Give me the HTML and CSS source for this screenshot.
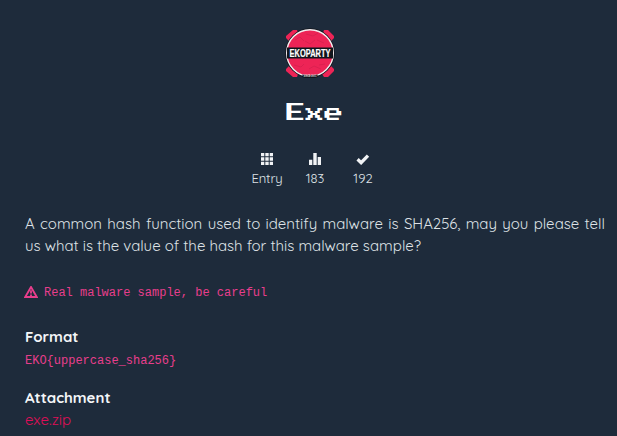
FILE: index.html
```
<!DOCTYPE html>
<html lang="en">
<head>
<meta charset="utf-8">
<title>Exe</title>
<link rel="stylesheet" href="styles.css">
</head>
<body>
<main class="challenge">
  <header class="head">
    <svg class="logo" viewBox="0 0 50 50">
      <path d="M7 2h4l1 3-9 8-3-3V8zM38 2h4l6 6v2l-3 3-8-8zM0 41l3-3 9 8-1 3H7l-7-6zM45 38l3 3v2l-6 6h-4l-2-3z" fill="#ed2456"/>
      <circle cx="24" cy="25" r="24.800" fill="#10151c"/>
      <circle cx="24" cy="25" r="23.300" fill="#ed2456" stroke="#f4eef0" stroke-width="1.400"/>
      <path d="M9 12l5-3 4 4M20 6l7 2 5-3M31 12l7 3M8 37l7 2 3-3M23 41l5-3 7 3M33 37l6-1M19 13l5 3 5-4" fill="none" stroke="#c91d49" stroke-width=".8" opacity=".6"/>
      <path d="M1 19.500h46v11H1z" fill="#10151c"/>
      <text class="logo-name" x="3.500" y="28.600" textLength="41" lengthAdjust="spacingAndGlyphs">EKOPARTY</text>
      <path d="M16.500 46.400q7.500 2 15 0v2.800q-7.500 1.800-15 0z" fill="#10151c"/>
      <text class="logo-since" x="17.500" y="49" textLength="13" lengthAdjust="spacingAndGlyphs">SINCE 2001</text>
    </svg>
    <h1 class="title">Exe</h1>
  </header>
  <div class="stats">
    <div class="stat entry">
      <svg class="icon" viewBox="0 0 12 12"><path d="M0 0h3.300v3.300H0zM4.300 0h3.400v3.300H4.300zM8.700 0H12v3.300H8.700zM0 4.300h3.300v3.400H0zM4.300 4.300h3.400v3.400H4.300zM8.700 4.300H12v3.400H8.700zM0 8.700h3.300V12H0zM4.300 8.700h3.400V12H4.300zM8.700 8.700H12V12H8.700z"/></svg>
      <span>Entry</span>
    </div>
    <div class="stat">
      <svg class="icon" viewBox="0 0 12 12"><path d="M0 6.700h3.300V12H0zM4.300 0h3.400v12H4.300zM8.700 4H12v8H8.700z"/></svg>
      <span>183</span>
    </div>
    <div class="stat">
      <svg class="icon check" viewBox="0 0 14 12"><path d="M1.600 6.300l3.500 3.400L12 2.600" fill="none" stroke="#f1f3f5" stroke-width="3.300"/></svg>
      <span>192</span>
    </div>
  </div>
  <p class="question">A common hash function used to identify malware is SHA256, may you please tell us what is the value of the hash for this malware sample?</p>
  <p class="warning">
    <svg class="alert" viewBox="0 0 14 12"><path d="M7 1L12.800 11H1.200z" fill="none" stroke="#e83e8c" stroke-width="1.900"/><path d="M6.100 4.200h1.800v3.300H6.100zM6.100 8.500h1.800v1.500H6.100z" fill="#e83e8c"/></svg>
    <code>Real malware sample, be careful</code>
  </p>
  <section class="block format">
    <h2 class="label">Format</h2>
    <code class="value">EKO{uppercase_sha256}</code>
  </section>
  <section class="block attachment">
    <h2 class="label">Attachment</h2>
    <a class="value link">exe.zip</a>
  </section>
</main>
</body>
</html>
```
FILE: styles.css
```
* { box-sizing: border-box; }
body {
  margin: 0;
  height: 436px;
  overflow: hidden;
  background: #1e2b3b;
  color: #dee2e6;
  font: 15px/22px Quicksand, Lato, sans-serif;
}
h1, h2, p { margin: 0; }
.challenge { padding: 28px 12px 0 25px; }
.head {
  display: flex;
  flex-direction: column;
  align-items: center;
  margin-left: -8px;
}
.logo { width: 50px; height: 50px; overflow: visible; }
.logo-name { font: 700 10.500px "Liberation Sans", sans-serif; fill: #fff; stroke: #fff; stroke-width: .2px; }
.logo-since { font: 700 2.600px "Liberation Sans", sans-serif; fill: #ddd; }
.title {
  margin: 18px 0 0 8px;
  height: 33px;
  color: #fff;
  font: 400 19px/34px "Press Start 2P", "VT323", "DejaVu Sans Mono", monospace;
}
.stats { display: flex; margin: 24px 0 0 218px; }
.stat {
  width: 48px;
  display: flex;
  flex-direction: column;
  align-items: center;
  font-size: 13px;
  line-height: 20px;
}
.entry { letter-spacing: -.1px; }
.icon { width: 12px; height: 12px; margin-bottom: 3px; fill: #f1f3f5; }
.check { width: 14px; }
.question { margin-top: 25px; text-align: justify; }
.warning {
  display: flex;
  align-items: center;
  gap: 6px;
  height: 22px;
  margin-top: 25px;
  color: #e83e8c;
}
.alert { width: 14px; height: 12px; margin: -2px 0 0 -1px; }
code { font: 12px/22px "Liberation Mono", monospace; color: #e83e8c; }
.block { display: flex; flex-direction: column; }
.format { margin-top: 22px; }
.format .value { line-height: 24px; padding-top: 1px; }
.attachment { margin-top: 14px; }
.label { font-size: 15px; line-height: 22px; font-weight: 700; color: #f4f6f8; }
.link { color: #e00e58; }
```
